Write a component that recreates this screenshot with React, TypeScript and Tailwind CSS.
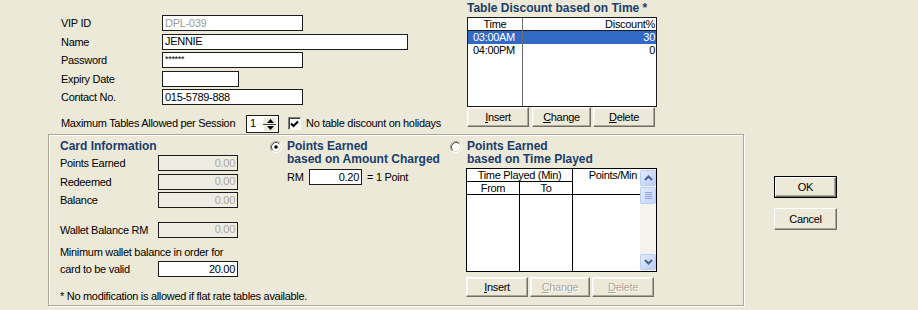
import React from "react";

const HEAD = "text-[12px] font-bold text-[#1A3D6B] leading-[13px] whitespace-nowrap";

function Field({
  w,
  value = "",
  muted = false,
  disabled = false,
  right = false,
  small = false,
}: {
  w: string;
  value?: string;
  muted?: boolean;
  disabled?: boolean;
  right?: boolean;
  small?: boolean;
}) {
  return (
    <div
      className={[
        "h-[16px] border border-[#1c1c1c] flex px-[2px] leading-none whitespace-nowrap overflow-hidden",
        w,
        disabled ? "bg-[#EEECE3] text-[#ACA899]" : "bg-white",
        muted ? "text-[#9a9a9a]" : "",
        right ? "justify-end items-center" : "items-center",
        small ? "text-[9px] items-start pt-[2px]" : "",
      ].join(" ")}
    >
      {value}
    </div>
  );
}

function Btn({
  w,
  children,
  disabled = false,
}: {
  w: string;
  children: React.ReactNode;
  disabled?: boolean;
}) {
  return (
    <div
      className={[
        "h-[20px] bg-[#ECE9D8] border border-t-white border-l-white border-r-[#716F64] border-b-[#716F64] shadow-[inset_-1px_-1px_0_#ACA899,inset_1px_1px_0_#F6F5EF] flex items-center justify-center",
        w,
        disabled ? "text-[#ACA899] [text-shadow:1px_1px_0_#fff]" : "text-black",
      ].join(" ")}
    >
      {children}
    </div>
  );
}

function Radio({ checked }: { checked: boolean }) {
  return (
    <svg width="12" height="12" viewBox="0 0 12 12" className="shrink-0">
      <circle cx="6" cy="6" r="5" fill="#fff" />
      <path d="M2.11 9.89 A5.5 5.5 0 0 1 9.89 2.11" stroke="#9D9D96" strokeWidth="1" fill="none" />
      <path d="M9.89 2.11 A5.5 5.5 0 0 1 2.11 9.89" stroke="#FFFFFF" strokeWidth="1" fill="none" />
      <path d="M2.82 9.18 A4.5 4.5 0 0 1 9.18 2.82" stroke="#55554F" strokeWidth="1" fill="none" />
      <path d="M9.18 2.82 A4.5 4.5 0 0 1 2.82 9.18" stroke="#DCD9CC" strokeWidth="1" fill="none" />
      {checked && <circle cx="6" cy="6" r="1.8" fill="#000" />}
    </svg>
  );
}

function ScrollBtn({ up }: { up: boolean }) {
  return (
    <div className="h-[16px] rounded-[2px] border border-[#BCCDF5] bg-gradient-to-br from-[#E3EBFE] to-[#B8CDF9] flex items-center justify-center">
      <svg width="9" height="6" viewBox="0 0 9 6">
        <path
          d={up ? "M1 5 L4.5 1.5 L8 5" : "M1 1 L4.5 4.5 L8 1"}
          stroke="#4D6185"
          strokeWidth="2"
          fill="none"
        />
      </svg>
    </div>
  );
}

export default function App() {
  return (
    <div className="w-[918px] h-[310px] bg-[#ECE9D8] flex flex-col font-['Liberation_Sans',Arial,sans-serif] text-[11px] tracking-[-0.3px] text-black overflow-hidden">
      {/* top */}
      <div className="flex h-[134px] shrink-0">
        <div className="w-[467px] pl-[61px] pt-[15px] flex flex-col">
          <div className="flex flex-col gap-[2px]">
            <div className="flex items-center">
              <div className="w-[101px]">VIP ID</div>
              <Field w="w-[141px]" value="DPL-039" muted />
            </div>
            <div className="flex items-center">
              <div className="w-[101px]">Name</div>
              <Field w="w-[246px]" value="JENNIE" />
            </div>
            <div className="flex items-center">
              <div className="w-[101px]">Password</div>
              <Field w="w-[141px]" value="******" small />
            </div>
            <div className="flex items-center">
              <div className="w-[101px]">Expiry Date</div>
              <Field w="w-[77px]" />
            </div>
            <div className="flex items-center">
              <div className="w-[101px]">Contact No.</div>
              <Field w="w-[141px]" value="015-5789-888" />
            </div>
          </div>
          <div className="flex items-center mt-[9px]">
            <div className="w-[185px] whitespace-nowrap">Maximum Tables Allowed per Session</div>
            <div className="w-[33px] h-[18px] border border-[#1c1c1c] bg-white flex items-center">
              <div className="flex-1 pl-[3px]">1</div>
              <div className="w-[13px] h-[14px] mr-[2px] flex flex-col gap-[1px] bg-[#404040]">
                <div className="h-[7px] bg-[#ECE9D8] border-t border-l border-white flex items-center justify-center">
                  <svg width="7" height="4" viewBox="0 0 7 4"><path d="M0 4 L3.5 0 L7 4 Z" fill="#000" /></svg>
                </div>
                <div className="h-[6px] bg-[#ECE9D8] border-t border-l border-white flex items-center justify-center">
                  <svg width="7" height="4" viewBox="0 0 7 4"><path d="M0 0 L3.5 4 L7 0 Z" fill="#000" /></svg>
                </div>
              </div>
            </div>
            <div className="ml-[9px] w-[13px] h-[13px] border border-t-[#808080] border-l-[#808080] border-b-white border-r-white shadow-[inset_1px_1px_0_#404040] bg-white flex items-center justify-center">
              <svg width="9" height="8" viewBox="0 0 9 8">
                <path d="M1 3.5 L3.5 6 L8 1.5" stroke="#000" strokeWidth="2" fill="none" />
              </svg>
            </div>
            <div className="ml-[5px] whitespace-nowrap">No table discount on holidays</div>
          </div>
        </div>

        <div className="w-[190px] flex flex-col pt-[1px]">
          <div className={HEAD + " h-[14px] leading-[14px] tracking-normal"}>Table Discount based on Time *</div>
          <div className="mt-[2px] h-[90px] border border-[#1c1c1c] bg-white flex">
            <div className="w-[55px] border-r border-[#6f6f6f] flex flex-col">
              <div className="h-[13px] border-b border-[#1c1c1c] text-center leading-[12px]">Time</div>
              <div className="h-[13px] bg-[#316AC5] text-white pl-[5px] leading-[13px]">03:00AM</div>
              <div className="h-[13px] pl-[5px] leading-[13px]">04:00PM</div>
            </div>
            <div className="flex-1 flex flex-col">
              <div className="h-[13px] border-b border-[#1c1c1c] text-right pr-[1px] leading-[12px]">Discount%</div>
              <div className="h-[13px] bg-[#316AC5] text-white text-right pr-[1px] leading-[13px]">30</div>
              <div className="h-[13px] text-right pr-[1px] leading-[13px]">0</div>
            </div>
          </div>
          <div className="flex mt-[0px]">
            <Btn w="w-[62px]"><span className="underline">I</span>nsert</Btn>
            <div className="ml-[3px]"><Btn w="w-[59px]"><span className="underline">C</span>hange</Btn></div>
            <div className="ml-[2px]"><Btn w="w-[62px]"><span className="underline">D</span>elete</Btn></div>
          </div>
        </div>
      </div>

      {/* bottom */}
      <div className="flex">
        <div className="ml-[48px] w-[696px] h-[172px] border border-[#ACA899] shadow-[inset_1px_1px_0_#fff,1px_1px_0_#fff] flex pl-[11px]">
          {/* col 1 */}
          <div className="w-[210px] flex flex-col pt-[4px]">
            <div className={HEAD + " h-[14px] leading-[14px] tracking-normal"}>Card Information</div>
            <div className="mt-[2px] flex flex-col gap-[2px]">
              <div className="flex items-center">
                <div className="w-[98px]">Points Earned</div>
                <Field w="w-[80px]" value="0.00" disabled right />
              </div>
              <div className="flex items-center">
                <div className="w-[98px]">Redeemed</div>
                <Field w="w-[80px]" value="0.00" disabled right />
              </div>
              <div className="flex items-center">
                <div className="w-[98px]">Balance</div>
                <Field w="w-[80px]" value="0.00" disabled right />
              </div>
            </div>
            <div className="mt-[13px] flex items-center">
              <div className="w-[98px] whitespace-nowrap">Wallet Balance RM</div>
              <Field w="w-[80px]" value="0.00" disabled right />
            </div>
            <div className="mt-[7px] h-[14px] leading-[14px] whitespace-nowrap">Minimum wallet balance in order for</div>
            <div className="mt-[2px] flex items-center">
              <div className="w-[98px]">card to be valid</div>
              <Field w="w-[80px]" value="20.00" right />
            </div>
            <div className="mt-[11px] h-[14px] leading-[14px] whitespace-nowrap">* No modification is allowed if flat rate tables available.</div>
          </div>

          {/* col 2 */}
          <div className="w-[180px] flex pt-[5px]">
            <div className="pt-[1px]"><Radio checked /></div>
            <div className="ml-[5px] flex flex-col">
              <div className={HEAD + " tracking-normal"}>Points Earned</div>
              <div className={HEAD + " tracking-normal"}>based on Amount Charged</div>
              <div className="mt-[3px] flex items-center">
                <div className="w-[22px]">RM</div>
                <Field w="w-[53px]" value="0.20" right />
                <div className="ml-[5px] whitespace-nowrap">= 1 Point</div>
              </div>
            </div>
          </div>

          {/* col 3 */}
          <div className="flex flex-col pt-[5px]">
            <div className="flex">
              <div className="pt-[1px]"><Radio checked={false} /></div>
              <div className="ml-[5px] flex flex-col">
                <div className={HEAD + " tracking-normal"}>Points Earned</div>
                <div className={HEAD + " tracking-normal"}>based on Time Played</div>
              </div>
            </div>
            <div className="ml-[16px] mt-[2px] w-[191px] h-[104px] border border-black bg-white flex">
              <div className="w-[106px] border-r border-black flex flex-col">
                <div className="h-[13px] border-b border-black text-center leading-[12px] whitespace-nowrap">Time Played (Min)</div>
                <div className="h-[13px] border-b border-black flex">
                  <div className="w-[53px] border-r border-black text-center leading-[12px]">From</div>
                  <div className="flex-1 text-center leading-[12px]">To</div>
                </div>
                <div className="flex-1 flex">
                  <div className="w-[53px] border-r border-black" />
                  <div className="flex-1" />
                </div>
              </div>
              <div className="w-[67px] flex flex-col">
                <div className="h-[26px] border-b border-black text-right pr-[3px] leading-[12px]">Points/Min</div>
                <div className="flex-1" />
              </div>
              <div className="w-[16px] bg-[#F4F3EE] flex flex-col pt-[1px] pb-[1px]">
                <ScrollBtn up />
                <div className="mt-[1px] h-[17px] rounded-[2px] border border-[#BCCDF5] bg-gradient-to-br from-[#E3EBFE] to-[#C3D4FA] flex flex-col items-center justify-center gap-[1px]">
                  <div className="w-[7px] h-[1px] bg-[#8CA6DC]" />
                  <div className="w-[7px] h-[1px] bg-[#8CA6DC]" />
                  <div className="w-[7px] h-[1px] bg-[#8CA6DC]" />
                  <div className="w-[7px] h-[1px] bg-[#8CA6DC]" />
                </div>
                <div className="flex-1" />
                <ScrollBtn up={false} />
              </div>
            </div>
            <div className="ml-[16px] mt-[5px] flex">
              <Btn w="w-[62px]"><span className="underline">I</span>nsert</Btn>
              <div className="ml-[2px]"><Btn w="w-[60px]" disabled><span className="underline">C</span>hange</Btn></div>
              <div className="ml-[2px]"><Btn w="w-[62px]" disabled><span className="underline">D</span>elete</Btn></div>
            </div>
          </div>
        </div>

        {/* OK / Cancel */}
        <div className="ml-[30px] pt-[42px] flex flex-col">
          <div className="w-[63px] h-[22px] border border-black">
            <div className="w-full h-full bg-[#ECE9D8] border border-t-white border-l-white border-r-[#716F64] border-b-[#716F64] shadow-[inset_-1px_-1px_0_#ACA899] flex items-center justify-center">OK</div>
          </div>
          <div className="mt-[10px] w-[63px] h-[22px] bg-[#ECE9D8] border border-t-white border-l-white border-r-[#716F64] border-b-[#716F64] shadow-[inset_-1px_-1px_0_#ACA899] flex items-center justify-center">Cancel</div>
        </div>
      </div>
    </div>
  );
}
